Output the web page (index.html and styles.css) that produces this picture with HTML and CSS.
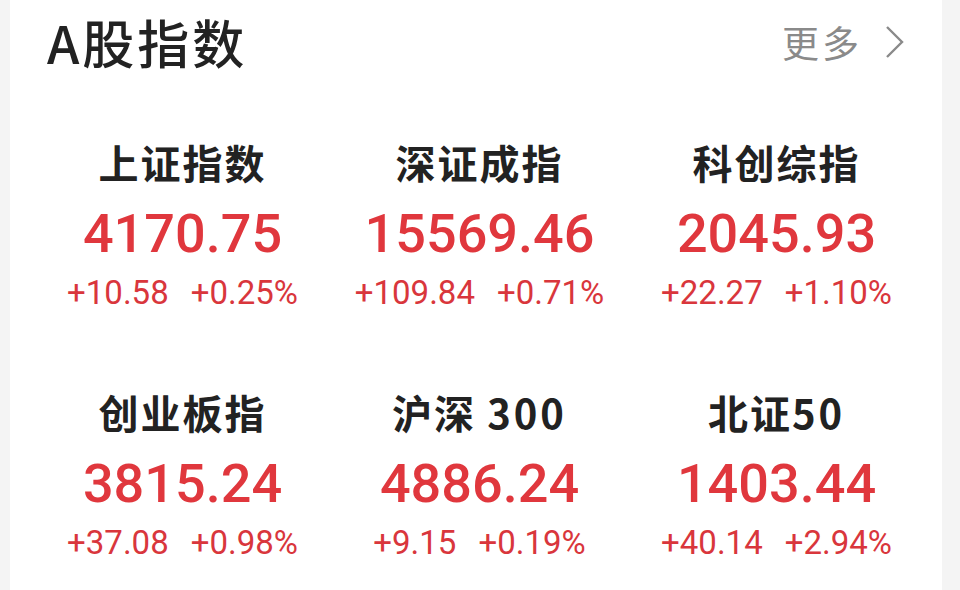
FILE: index.html
```html
<!DOCTYPE html>
<html lang="zh">
<head>
<meta charset="utf-8">
<link rel="stylesheet" href="styles.css">
</head>
<body>
<div class="card">
  <div class="header">
    <h1 class="title">A股指数</h1>
    <a class="more">更多<svg class="chev" viewBox="0 0 20 34" width="20" height="34"><path d="M3 2 L18 17 L3 32" fill="none" stroke="#8a8a8a" stroke-width="2.4"/></svg></a>
  </div>
  <div class="grid">
    <div class="item"><div class="name">上证指数</div><div class="value">4170.75</div><div class="change"><span>+10.58</span><span>+0.25%</span></div></div>
    <div class="item"><div class="name">深证成指</div><div class="value">15569.46</div><div class="change"><span>+109.84</span><span>+0.71%</span></div></div>
    <div class="item"><div class="name">科创综指</div><div class="value">2045.93</div><div class="change"><span>+22.27</span><span>+1.10%</span></div></div>
    <div class="item"><div class="name">创业板指</div><div class="value">3815.24</div><div class="change"><span>+37.08</span><span>+0.98%</span></div></div>
    <div class="item"><div class="name">沪深 <span class="digits">300</span></div><div class="value">4886.24</div><div class="change"><span>+9.15</span><span>+0.19%</span></div></div>
    <div class="item"><div class="name">北证<span class="digits">50</span></div><div class="value">1403.44</div><div class="change"><span>+40.14</span><span>+2.94%</span></div></div>
  </div>
</div>
</body>
</html>
```
FILE: styles.css
```css
html, body {
  margin: 0;
  padding: 0;
  background: #f4f4f4;
}
body {
  font-family: "Noto Sans CJK SC", "Noto Sans", sans-serif;
}
.card {
  background: #fff;
  margin: 0 18px 0 10px;
  height: 590px;
  overflow: hidden;
}
.header {
  display: flex;
  justify-content: space-between;
  align-items: center;
  height: 84px;
  padding: 0 38px 0 37px;
}
.title {
  margin: 0;
  font-size: 52px;
  font-weight: 500;
  color: #222;
  line-height: 84px;
  letter-spacing: 3px;
}
.more {
  display: flex;
  align-items: center;
  gap: 22px;
  font-size: 37px;
  color: #8a8a8a;
  letter-spacing: 3px;
}
.grid {
  display: grid;
  grid-template-columns: repeat(3, 297px);
  row-gap: 74px;
  margin-top: 53px;
  padding-left: 24px;
}
.item {
  display: flex;
  flex-direction: column;
  align-items: center;
}
.name {
  font-size: 40px;
  font-weight: 700;
  line-height: 50px;
  color: #222;
  letter-spacing: 2px;
}
.digits {
  letter-spacing: 3px;
}
.value {
  margin-top: 17px;
  font-family: Roboto, "Noto Sans", sans-serif;
  font-weight: 500;
  font-size: 54px;
  line-height: 60px;
  color: #e0373d;
}
.change {
  margin-top: 9px;
  display: flex;
  gap: 22px;
  font-family: Roboto, "Noto Sans", sans-serif;
  font-size: 33px;
  line-height: 40px;
  color: #d9363c;
}
```
